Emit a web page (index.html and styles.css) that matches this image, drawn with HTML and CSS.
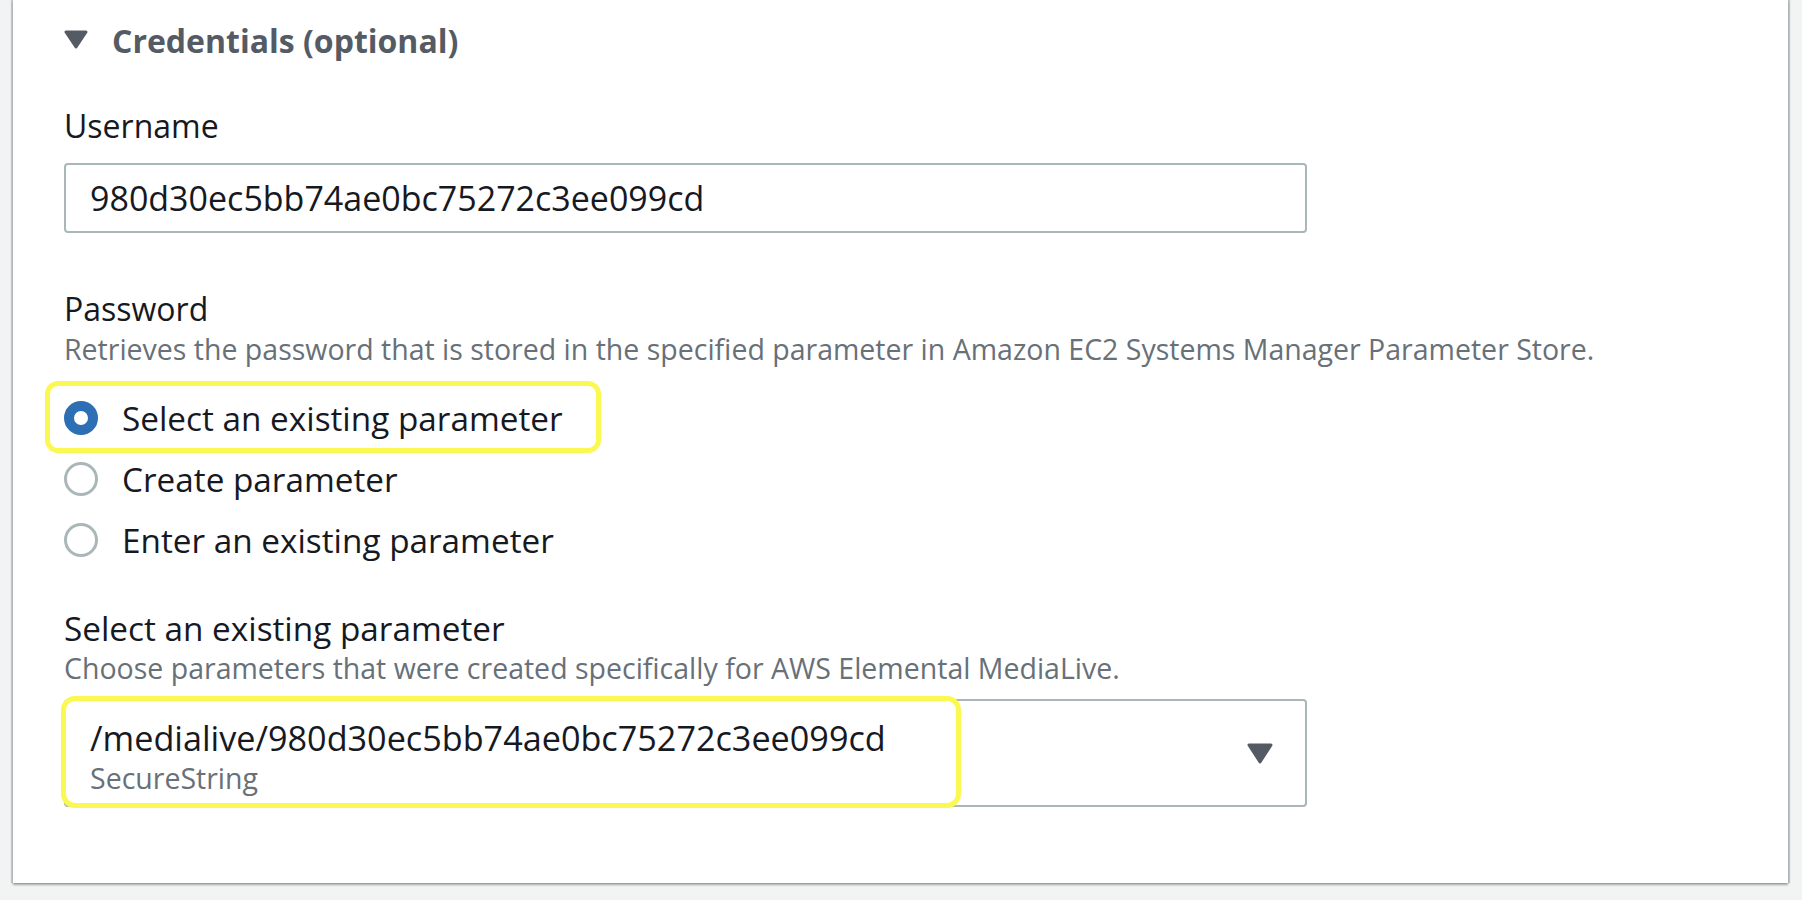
FILE: index.html
```html
<!DOCTYPE html>
<html lang="en">
<head>
<meta charset="utf-8">
<title>Credentials</title>
<link rel="stylesheet" href="styles.css">
</head>
<body>
<div class="page">
  <section class="panel">
    <h2 class="panel-header">
      <svg class="caret" viewBox="0 0 24 19" width="24" height="19" aria-hidden="true">
        <polygon points="2,2 22,2 12,17" fill="#545b64" stroke="#545b64" stroke-width="3" stroke-linejoin="round"/>
      </svg>
      <span>Credentials (optional)</span>
    </h2>

    <div class="field field-username">
      <div class="field-label">Username</div>
      <div class="input">980d30ec5bb74ae0bc75272c3ee099cd</div>
    </div>

    <div class="field field-password">
      <div class="field-label">Password</div>
      <div class="field-desc">Retrieves the password that is stored in the specified parameter in Amazon EC2 Systems Manager Parameter Store.</div>
      <div class="radio-group">
        <div class="radio-row">
          <span class="radio checked"></span>
          <span class="radio-label">Select an existing parameter</span>
          <span class="highlight highlight-radio"></span>
        </div>
        <div class="radio-row">
          <span class="radio"></span>
          <span class="radio-label">Create parameter</span>
        </div>
        <div class="radio-row">
          <span class="radio"></span>
          <span class="radio-label">Enter an existing parameter</span>
        </div>
      </div>
    </div>

    <div class="field field-select">
      <div class="field-label field-label-wide">Select an existing parameter</div>
      <div class="field-desc">Choose parameters that were created specifically for AWS Elemental MediaLive.</div>
      <div class="select">
        <div class="select-value">
          <div class="select-main">/medialive/980d30ec5bb74ae0bc75272c3ee099cd</div>
          <div class="select-sub">SecureString</div>
        </div>
        <svg class="select-caret" viewBox="0 0 26 21" width="26" height="21" aria-hidden="true">
          <polygon points="2,2 24,2 13,19" fill="#545b64" stroke="#545b64" stroke-width="3" stroke-linejoin="round"/>
        </svg>
        <span class="highlight highlight-select"></span>
      </div>
    </div>
  </section>
</div>
</body>
</html>
```

FILE: styles.css
```css
* { box-sizing: border-box; }

html, body {
  margin: 0;
  padding: 0;
  background: #f2f3f3;
  font-family: "Open Sans", "Noto Sans", sans-serif;
  color: #16191f;
}

.page {
  height: 900px;
  padding: 0 14px 17px 13px;
}

.panel {
  background: #ffffff;
  height: 883px;
  padding: 21px 0 75px 51px;
  box-shadow: 0 2px 2px 0 rgba(0, 28, 36, 0.35), 2px 0 1px 0 rgba(0, 28, 36, 0.2), -2px 0 1px 0 rgba(0, 28, 36, 0.18);
}

.panel-header {
  margin: 0;
  display: flex;
  align-items: center;
  gap: 24px;
  height: 40px;
  font-size: 32px;
  line-height: 40px;
  font-weight: 700;
  color: #545b64;
}

.caret {
  display: block;
  margin-top: -3px;
  flex: none;
}

.field-label {
  font-size: 32px;
  line-height: 40px;
  color: #16191f;
}

.field-label-wide {
  font-size: 33.3px;
}

.field-desc {
  margin-top: 3px;
  font-size: 28.5px;
  line-height: 35px;
  color: #687078;
}

.field-username { margin-top: 45px; }

.input {
  margin-top: 17px;
  width: 1243px;
  height: 70px;
  border: 2px solid #aab7b8;
  border-radius: 4px;
  padding: 0 24px;
  font-size: 34px;
  line-height: 66px;
  color: #16191f;
}

.field-password { margin-top: 56px; }

.radio-group {
  margin-top: 21px;
  display: flex;
  flex-direction: column;
}

.radio-row {
  position: relative;
  display: flex;
  align-items: center;
  gap: 24px;
  height: 61px;
}

.radio {
  width: 34px;
  height: 34px;
  margin-top: -2px;
  border-radius: 50%;
  border: 3px solid #aab7b8;
  background: #fff;
  flex: none;
}

.radio.checked {
  border: 10px solid #2c6fb5;
}

.radio-label {
  font-size: 33.3px;
  line-height: 61px;
  color: #16191f;
}

.highlight {
  position: absolute;
  border: 5px solid #fbf852;
  pointer-events: none;
}

.highlight-radio {
  left: -19px;
  top: -7px;
  width: 556px;
  height: 72px;
  border-radius: 13px;
}

.field-select { margin-top: 37px; }

.select {
  position: relative;
  margin-top: 13px;
  width: 1243px;
  height: 108px;
  border: 2px solid #aab7b8;
  border-radius: 4px;
  padding: 0 32px 0 24px;
  display: flex;
  align-items: center;
  justify-content: space-between;
}

.select-value {
  margin-top: 7px;
}

.select-main {
  font-size: 34.2px;
  line-height: 40px;
  color: #16191f;
}

.select-sub {
  margin-top: 3px;
  font-size: 28.5px;
  line-height: 34px;
  color: #687078;
}

.select-caret {
  display: block;
  flex: none;
}

.highlight-select {
  left: -5px;
  top: -5px;
  width: 900px;
  height: 112px;
  border-radius: 14px;
}
```
